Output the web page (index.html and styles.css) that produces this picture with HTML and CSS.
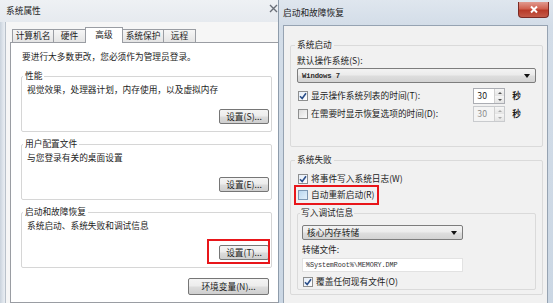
FILE: index.html
```html
<!DOCTYPE html>
<html lang="zh-CN">
<head>
<meta charset="utf-8">
<link rel="stylesheet" href="styles.css">
</head>
<body>
<div class="win win-sys">
  <div class="titlebar">
    <span class="title">系统属性</span>
    <svg class="close-sm" viewBox="0 0 9 9" width="9" height="9"><path d="M1 1 L8 8 M8 1 L1 8" stroke="#6a6f78" stroke-width="1.4" fill="none"/></svg>
  </div>
  <div class="client">
    <div class="tabs">
      <div class="tab t1">计算机名</div>
      <div class="tab t2">硬件</div>
      <div class="tab t3 active">高级</div>
      <div class="tab t4">系统保护</div>
      <div class="tab t5">远程</div>
    </div>
    <div class="pane">
      <div class="note">要进行大多数更改，您必须作为管理员登录。</div>
      <fieldset class="grp">
        <legend>性能</legend>
        <div class="desc">视觉效果，处理器计划，内存使用，以及虚拟内存</div>
        <div class="btn-row"><span class="btn">设置(S)...</span></div>
      </fieldset>
      <fieldset class="grp">
        <legend>用户配置文件</legend>
        <div class="desc">与您登录有关的桌面设置</div>
        <div class="btn-row"><span class="btn">设置(E)...</span></div>
      </fieldset>
      <fieldset class="grp">
        <legend>启动和故障恢复</legend>
        <div class="desc">系统启动、系统失败和调试信息</div>
        <div class="btn-row"><span class="btn hl-btn">设置(T)...</span></div>
      </fieldset>
      <div class="env-row"><span class="btn env">环境变量(N)...</span></div>
    </div>
  </div>
</div>

<div class="win win-boot">
  <div class="titlebar">
    <span class="title">启动和故障恢复</span>
    <span class="close-btn"><svg viewBox="0 0 10 9" width="10" height="9"><path d="M2 1.5 L8 7.5 M8 1.5 L2 7.5" stroke="#fff" stroke-width="2" fill="none"/></svg></span>
  </div>
  <div class="client">
    <fieldset class="bgrp g-start">
      <legend>系统启动</legend>
      <div class="lbl l-os">默认操作系统(S):</div>
      <div class="select s-os"><span class="mono">Windows 7</span><span class="arrow"></span></div>
      <div class="row r1">
        <span class="chk"><span class="box checked"><svg viewBox="0 0 8 8" width="8" height="8"><path d="M1 4.2 L3.2 6.5 L7 1.2" stroke="#2b4f8a" stroke-width="1.6" fill="none"/></svg></span>显示操作系统列表的时间(T):</span>
        <span class="spin"><span class="val">30</span><span class="spin-btns"><span class="up"></span><span class="dn"></span></span></span>
        <span class="unit">秒</span>
      </div>
      <div class="row r2">
        <span class="chk"><span class="box"></span>在需要时显示恢复选项的时间(D):</span>
        <span class="spin disabled"><span class="val">30</span><span class="spin-btns"><span class="up"></span><span class="dn"></span></span></span>
        <span class="unit">秒</span>
      </div>
    </fieldset>
    <fieldset class="bgrp g-fail">
      <legend>系统失败</legend>
      <span class="chk c-w"><span class="box checked"><svg viewBox="0 0 8 8" width="8" height="8"><path d="M1 4.2 L3.2 6.5 L7 1.2" stroke="#2b4f8a" stroke-width="1.6" fill="none"/></svg></span>将事件写入系统日志(W)</span>
      <span class="chk c-r hl"><span class="box blue"></span>自动重新启动(R)</span>
      <fieldset class="sub">
        <legend>写入调试信息</legend>
        <div class="select s-dump"><span>核心内存转储</span><span class="arrow"></span></div>
        <div class="lbl l-file">转储文件:</div>
        <div class="input"><span class="mono">%SystemRoot%\MEMORY.DMP</span></div>
        <span class="chk c-o"><span class="box checked"><svg viewBox="0 0 8 8" width="8" height="8"><path d="M1 4.2 L3.2 6.5 L7 1.2" stroke="#2b4f8a" stroke-width="1.6" fill="none"/></svg></span>覆盖任何现有文件(O)</span>
      </fieldset>
    </fieldset>
  </div>
</div>
</body>
</html>
```

FILE: styles.css
```css
* { box-sizing: border-box; }
html, body { margin: 0; padding: 0; }
body {
  width: 553px;
  height: 303px;
  position: relative;
  overflow: hidden;
  background: #ffffff;
  font-family: "Noto Sans CJK SC", "Noto Sans", sans-serif;
  font-size: 8.7px;
  line-height: 12px;
  color: #1c1c1c;
}

.win { position: absolute; top: 0; height: 303px; display: flex; flex-direction: column; }

/* ---------- left window: 系统属性 ---------- */
.win-sys { left: 0; width: 300px; background: linear-gradient(90deg, #c9d2dc 0, #dfe5ec 3px, #e9edf2 5px); }
.win-sys .titlebar {
  height: 22px;
  display: flex;
  align-items: center;
  padding-left: 6px;
  position: relative;
  background: linear-gradient(#eef1f4, #e6eaef);
}
.win-sys .close-sm { position: absolute; left: 269px; top: 4px; }
.win-sys .client {
  flex: 1;
  margin-left: 5px;
  background: #f6f6f6;
  border-left: 1px solid #b9c1ca;
  padding: 5px 0 0 4px;
  display: flex;
  flex-direction: column;
}
.tabs { display: flex; align-items: flex-end; height: 15px; padding-left: 2px; position: relative; z-index: 1; }
.tab {
  height: 13px;
  border: 1px solid #9a9da3;
  border-bottom: none;
  margin-right: -1px;
  background: linear-gradient(#f6f6f6, #e4e4e4);
  display: flex;
  align-items: center;
  justify-content: center;
  color: #222;
}
.t1 { width: 42px; }
.t2 { width: 33px; }
.t3 { width: 38px; }
.t4 { width: 42px; }
.t5 { width: 33px; }
.tab.active { height: 16px; margin-bottom: -1px; background: #ffffff; align-items: flex-start; padding-top: 1px; }
.pane {
  flex: 1;
  background: #ffffff;
  border: 1px solid #9a9da3;
  padding: 8px 27px 0 10px;
  display: flex;
  flex-direction: column;
}
.note { height: 12px; padding-left: 1px; }
.grp {
  margin: 6px 0 0 0;
  border: 1px solid #d6d6d6;
  border-radius: 2px;
  padding: 0 2px 7px 5px;
  min-width: 0;
}
.grp:first-of-type { margin-top: 7px; }
.grp legend { padding: 0 2px; margin-left: -4px; line-height: 12px; height: 12px; }
.desc { margin-top: 2px; height: 12px; }
.btn-row { display: flex; justify-content: flex-end; margin-top: 13px; }
.btn {
  width: 50px;
  height: 15px;
  border: 1px solid #767676;
  border-radius: 2px;
  background: linear-gradient(#f4f4f4 0%, #ececec 48%, #dcdcdc 52%, #cfcfcf 100%);
  display: flex;
  align-items: center;
  justify-content: center;
  line-height: 12px;
  color: #1c1c1c;
  position: relative;
}
.hl-btn::after {
  content: "";
  position: absolute;
  left: -13px; right: -2px; top: -7px; bottom: -5px;
  border: 2px solid #e8161a;
}
.env-row { display: flex; justify-content: flex-end; margin-top: 10px; padding-right: 3px; }
.btn.env { width: 81px; height: 17px; }

/* ---------- right window: 启动和故障恢复 ---------- */
.win-boot {
  left: 278px;
  width: 275px;
  background: linear-gradient(#dfe6ee 0, #d3dde8 25px, #cbd7e4 100%);
  border-left: 1px solid #8e9cab;
}
.win-boot .titlebar {
  height: 25px;
  display: flex;
  align-items: center;
  padding: 0 0 0 4px;
  position: relative;
  color: #1a1a1a;
}
.close-btn {
  position: absolute;
  left: 239px; top: 2px;
  width: 31px; height: 16px;
  border: 1px solid #7a2a24;
  border-top: none;
  border-radius: 0 0 4px 4px;
  background: linear-gradient(#e19a8f 0%, #d0604f 45%, #b83a28 55%, #c45a48 100%);
  display: flex; align-items: center; justify-content: center;
}
.win-boot .client {
  flex: 1;
  margin: 0 5px 0 4px;
  background: #f1f1f1;
  border: 1px solid #96a3b2;
  border-bottom: none;
  padding: 13px 4px 0 6px;
  display: flex;
  flex-direction: column;
}
.bgrp {
  margin: 0;
  border: 1px solid #dadada;
  border-radius: 2px;
  padding: 0 6px 24px 6px;
  min-width: 0;
  display: flex;
  flex-direction: column;
}
.bgrp legend { padding: 0 2px; margin-left: -2px; height: 12px; line-height: 12px; }
.g-fail { margin-top: 7px; padding-bottom: 4px; }
.lbl { height: 12px; }
.l-os { margin-top: 4px; }
.select {
  height: 15px;
  border: 1px solid #7d7d7d;
  border-radius: 2px;
  background: linear-gradient(#f3f3f3 0%, #ebebeb 48%, #dedede 52%, #d3d3d3 100%);
  display: flex;
  align-items: center;
  justify-content: space-between;
  padding: 0 5px 0 4px;
}
.s-os { margin-top: 1px; }
.mono { font-family: "Liberation Mono", "DejaVu Sans Mono", monospace; font-size: 7.2px; font-weight: bold; color: #2a2a2a; letter-spacing: -0.1px; }
.arrow { width: 0; height: 0; border-left: 3px solid transparent; border-right: 3px solid transparent; border-top: 4px solid #111; }
.row { display: flex; align-items: center; height: 16px; padding-right: 15px; }
.r1 { margin-top: 5px; }
.r2 { margin-top: 2px; }
.row .chk { flex: 1; }
.chk { display: flex; align-items: center; height: 12px; width: fit-content; }
.box {
  width: 10px; height: 10px;
  margin: 0 3px 0 1px;
  border: 1px solid #8e8f8f;
  background: linear-gradient(135deg, #dcdcdc, #fbfbfb);
  display: flex; align-items: center; justify-content: center;
  flex: none;
}
.box.checked { background: linear-gradient(135deg, #e6eef8, #ffffff); }
.box.blue { background: linear-gradient(135deg, #b9d6ef, #e3f0fb); border-color: #7d97b3; }
.spin {
  width: 32px; height: 16px;
  border: 1px solid #abadb3;
  background: #ffffff;
  display: flex; align-items: center; justify-content: space-between;
  padding-left: 3px;
}
.spin.disabled { background: #f4f4f4; border-color: #c9cbce; color: #8d8d8d; }
.spin-btns { width: 10px; height: 14px; display: flex; flex-direction: column; border-left: 1px solid #d0d0d0; }
.spin-btns span { flex: 1; display: flex; align-items: center; justify-content: center; background: linear-gradient(#f6f6f6, #e4e4e4); }
.spin-btns .up::before { content: ""; border-left: 2px solid transparent; border-right: 2px solid transparent; border-bottom: 2px solid #555; }
.spin-btns .dn::before { content: ""; border-left: 2px solid transparent; border-right: 2px solid transparent; border-top: 2px solid #555; }
.spin.disabled .spin-btns span::before { border-top-color: #aaa; border-bottom-color: #aaa; }
.unit { margin-left: 7px; font-weight: bold; }
.c-w { margin-top: 7px; }
.c-r { margin-top: 4px; position: relative; }
.hl::after {
  content: "";
  position: absolute;
  left: -3px; right: -4px; top: -4px; bottom: -4px;
  border: 2px solid #e8161a;
}
.sub {
  margin: 6px 0 0 0;
  border: 1px solid #dadada;
  border-radius: 2px;
  padding: 0 4px 1px 4px;
  min-width: 0;
  display: flex;
  flex-direction: column;
}
.sub legend { padding: 0 1px; height: 12px; line-height: 12px; }
.s-dump { width: 161px; margin-top: 6px; }
.l-file { margin-top: 4px; }
.input {
  width: 161px; height: 14px;
  margin-top: 2px;
  background: #ffffff;
  border: 1px solid #e2e2e2;
  display: flex; align-items: center;
  padding-left: 3px;
}
.input .mono { font-weight: normal; font-size: 6.8px; color: #333; }
.c-o { margin-top: 4px; }
```
